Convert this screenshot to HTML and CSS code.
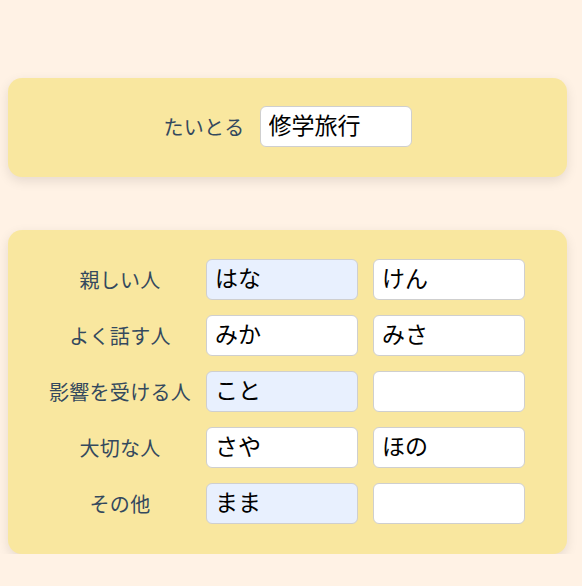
FILE: index.html
```html
<!DOCTYPE html>
<html lang="ja">
<head>
<meta charset="utf-8">
<link rel="stylesheet" href="styles.css">
</head>
<body>
<main class="page">
  <section class="card title-card">
    <label class="label" for="title">たいとる</label>
    <input class="field" id="title" type="text" value="修学旅行">
  </section>
  <section class="card people-card">
    <div class="grid">
      <span class="label">親しい人</span>
      <input class="field filled" type="text" value="はな">
      <input class="field" type="text" value="けん">
      <span class="label">よく話す人</span>
      <input class="field" type="text" value="みか">
      <input class="field" type="text" value="みさ">
      <span class="label">影響を受ける人</span>
      <input class="field filled" type="text" value="こと">
      <input class="field" type="text" value="">
      <span class="label">大切な人</span>
      <input class="field" type="text" value="さや">
      <input class="field" type="text" value="ほの">
      <span class="label">その他</span>
      <input class="field filled" type="text" value="まま">
      <input class="field" type="text" value="">
    </div>
  </section>
</main>
</body>
</html>
```

FILE: styles.css
```css
html, body {
  margin: 0;
  padding: 0;
  background: #fff2e5;
}
body {
  font-family: "Noto Sans CJK JP", "Noto Sans", sans-serif;
}
.page {
  padding: 78px 0 0 8px;
  display: flex;
  flex-direction: column;
  gap: 53px;
}
.card {
  width: 559px;
  box-sizing: border-box;
  background: #f9e79f;
  border-radius: 14px;
  box-shadow: 0 4px 12px rgba(0, 0, 0, 0.1);
}
.title-card {
  height: 99px;
  display: flex;
  align-items: center;
  justify-content: center;
  gap: 15px;
  padding-bottom: 2px;
}
.label {
  font-size: 20px;
  color: #34495e;
  line-height: 1;
  letter-spacing: 0.3px;
  white-space: nowrap;
}
.field {
  width: 152px;
  height: 41px;
  box-sizing: border-box;
  border: 1px solid #cfcfcf;
  border-radius: 6px;
  background: #ffffff;
  padding: 0 8px 6px 8px;
  font-family: "Noto Sans CJK JP", "Noto Sans", sans-serif;
  font-size: 23px;
  color: #000000;
  outline: none;
  margin: 0;
}
.field.filled {
  background: #e8f0fe;
}
.people-card {
  padding: 29px 0 30px 41px;
}
.grid {
  display: grid;
  grid-template-columns: 142px 152px 152px;
  column-gap: 15px;
  row-gap: 15px;
  justify-content: start;
  align-items: center;
}
.grid .label {
  text-align: center;
  justify-self: center;
}
```
